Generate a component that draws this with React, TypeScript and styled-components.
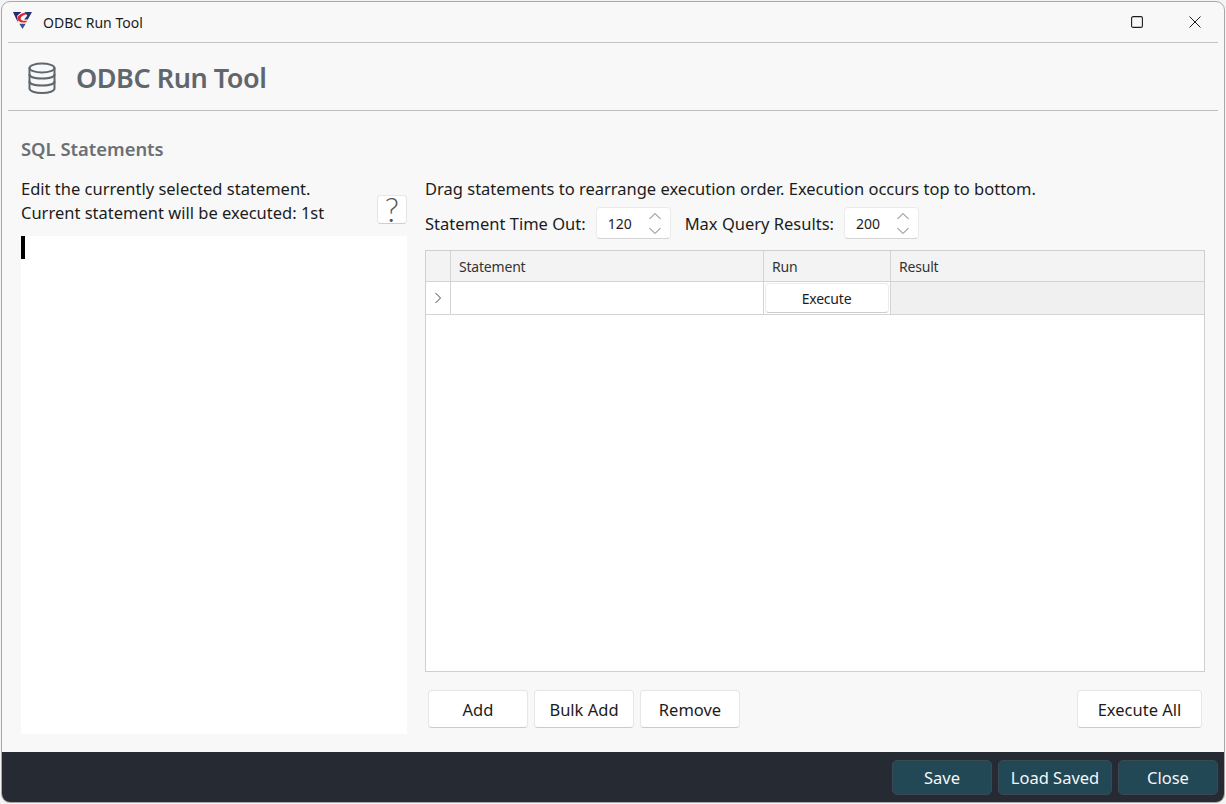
import React from "react";
import styled, { createGlobalStyle } from "styled-components";

const Global = createGlobalStyle`
  html, body { margin: 0; padding: 0; width: 1226px; height: 804px; overflow: hidden; background: #f4f4f4; }
  * { box-sizing: border-box; }
  body { font-family: "Noto Sans", "Open Sans", sans-serif; color: #1c1c1c; }
`;

const Window = styled.div`
  margin: 1px;
  width: 1224px;
  height: 802px;
  border: 1px solid #a9a9a9;
  border-radius: 9px;
  overflow: hidden;
  background: #f8f8f8;
  display: flex;
  flex-direction: column;
`;
const TitleBar = styled.div`
  height: 41px;
  margin: 0 6px;
  flex: none;
  border-bottom: 1px solid #c4c4c4;
  display: flex;
  align-items: center;
  padding-left: 5px;
`;
const LogoMark = styled.svg`
  margin-top: -3px;
`;
const TitleText = styled.span`
  font-size: 14px;
  margin-left: 11px;
`;
const WinButtons = styled.div`
  margin-left: auto;
  display: flex;
  align-items: center;
  gap: 46px;
  padding-right: 17px;
`;
const Header = styled.div`
  height: 68px;
  margin: 0 6px;
  padding: 3px 0 0 20px;
  flex: none;
  border-bottom: 1px solid #bdbdbd;
  display: flex;
  align-items: center;
  gap: 20px;
`;
const HeaderTitle = styled.h1`
  margin: -2px 0 0;
  font-size: 27px;
  font-weight: 600;
  color: #5f666d;
  letter-spacing: -0.45px;
`;
const Body = styled.div`
  flex: 1;
  min-height: 0;
  display: flex;
  flex-direction: column;
  padding: 25px 20px 18px 19px;
`;
const SectionTitle = styled.h2`
  margin: 0;
  height: 26px;
  line-height: 26px;
  font-size: 18.4px;
  font-weight: 600;
  color: #6b7075;
`;
const Columns = styled.div`
  flex: 1;
  min-height: 0;
  display: grid;
  grid-template-columns: 386px 780px;
  column-gap: 18px;
  padding-top: 15px;
`;
const Left = styled.div`
  display: flex;
  flex-direction: column;
  min-height: 0;
`;
const LeftHead = styled.div`
  display: flex;
  justify-content: space-between;
  height: 48px;
`;
const Copy = styled.div`
  font-size: 16.5px;
  line-height: 24px;
  white-space: nowrap;
`;
const HelpButton = styled.button`
  align-self: flex-end;
  width: 30px;
  height: 29px;
  margin-bottom: 1px;
  padding: 0;
  background: #fff;
  border: 1px solid #e5e5e5;
  border-bottom-color: #cfcfcf;
  border-radius: 4px;
  font: 300 33px/27px "Lato", sans-serif;
  color: #555;
`;
const Editor = styled.div`
  flex: 1;
  margin-top: 11px;
  background: #fff;
`;
const Caret = styled.div`
  width: 4px;
  height: 23px;
  background: #000;
`;
const Right = styled.div`
  display: flex;
  flex-direction: column;
  min-height: 0;
`;
const SpinRow = styled.div`
  display: flex;
  align-items: center;
  height: 32px;
  margin-top: 6px;
  font-size: 16.5px;
`;
const SpinLabel = styled.span`
  margin-right: 10px;
  white-space: nowrap;
`;
const Spinner = styled.div`
  width: 75px;
  height: 32px;
  margin-right: 14px;
  background: #fff;
  border: 1px solid #ebebeb;
  border-bottom-color: #d4d4d4;
  border-radius: 4px;
  display: flex;
  align-items: center;
  justify-content: space-between;
  padding: 0 8px 0 11px;
  font-size: 14px;
`;
const Arrows = styled.div`
  display: flex;
  flex-direction: column;
  gap: 7px;
`;
const Table = styled.div`
  flex: 1;
  min-height: 0;
  margin-top: 11px;
  background: #fff;
  border: 1px solid #cfcfcf;
`;
const Row = styled.div<{ $h: number }>`
  height: ${(p) => p.$h}px;
  display: grid;
  grid-template-columns: 25px 313px 127px 1fr;
  border-bottom: 1px solid #d4d4d4;
  font-size: 14px;
  letter-spacing: -0.2px;
`;
const HeadCell = styled.div`
  background: #f3f3f3;
  border-right: 1px solid #d4d4d4;
  padding: 1px 0 0 8px;
  display: flex;
  align-items: center;
  color: #333;
  &:last-child { border-right: 0; }
`;
const Cell = styled.div<{ $shade?: boolean }>`
  background: ${(p) => (p.$shade ? "#f0f0f0" : "#fff")};
  border-right: 1px solid #d4d4d4;
  display: flex;
  align-items: center;
  justify-content: center;
  &:last-child { border-right: 0; }
`;
const ExecButton = styled.button`
  width: 124px;
  height: 30px;
  margin-right: 1px;
  background: #fff;
  border: 1px solid #ececec;
  border-bottom-color: #cccccc;
  border-radius: 4px;
  font: 400 14px "Noto Sans", sans-serif;
  letter-spacing: -0.2px;
  color: #1c1c1c;
  padding: 0;
`;
const Actions = styled.div`
  display: flex;
  gap: 6px;
  padding: 18px 3px 6px 3px;
  height: 62px;
  flex: none;
`;
const Button = styled.button<{ $w: number; $push?: boolean }>`
  width: ${(p) => p.$w}px;
  height: 38px;
  margin-left: ${(p) => (p.$push ? "auto" : "0")};
  background: #fff;
  border: 1px solid #e6e6e6;
  border-bottom-color: #cbcbcb;
  border-radius: 4px;
  font: 400 16.5px "Noto Sans", sans-serif;
  color: #1c1c1c;
  padding: 0;
`;
const Footer = styled.div`
  height: 50px;
  flex: none;
  background: #262a33;
  display: flex;
  justify-content: flex-end;
  gap: 6px;
  padding: 8px 6px 0 0;
`;
const FootButton = styled.button<{ $w: number }>`
  width: ${(p) => p.$w}px;
  height: 35px;
  background: #224855;
  border: 1px solid #3a4a52;
  border-radius: 5px;
  color: #f4f6f7;
  font: 400 16.5px "Noto Sans", sans-serif;
  padding: 0;
`;

const Logo = () => (
  <LogoMark width="19" height="17" viewBox="0 0 18 16">
    <path d="M0 0h8L4 3.6 4.6 10z" fill="#1f2d6b" />
    <path d="M11 0h7l-4 7H10.5l3-3.5z" fill="#26346f" />
    <path d="M6 11h6L9 16z" fill="#39508f" />
    <path d="M12.5 0.5C8 1 4.6 3 4.4 5.8 4.2 8.6 7.5 10.5 12.4 9.6L13.6 8C10.2 8.6 7 8 7.2 6 7.4 4.2 10 3 12.2 2.4z" fill="#e1212e" />
  </LogoMark>
);

const DbIcon = () => (
  <svg width="28" height="32" viewBox="0 0 28 32" fill="none" stroke="#5f666d" strokeWidth="2" strokeLinecap="round">
    <ellipse cx="14" cy="6" rx="12.5" ry="4.5" />
    <path d="M1.5 6v20.5c0 2.5 5.5 4.5 12.5 4.5s12.5-2 12.5-4.5V6" />
    <path d="M1.5 12.5c0 2.5 5.5 4 12.5 4s12.5-1.5 12.5-4" />
    <path d="M1.5 19.5c0 2.5 5.5 4 12.5 4s12.5-1.5 12.5-4" />
  </svg>
);

const Chevron = ({ up }: { up?: boolean }) => (
  <svg width="14" height="8" viewBox="0 0 14 8" fill="none" stroke="#707070" strokeWidth="1">
    <path d={up ? "M1.5 7 7 1.5 12.5 7" : "M1.5 1 7 6.5 12.5 1"} />
  </svg>
);

const Spin = ({ value }: { value: number }) => (
  <Spinner>
    <span>{value}</span>
    <Arrows>
      <Chevron up />
      <Chevron />
    </Arrows>
  </Spinner>
);

export default function App() {
  return (
    <>
      <Global />
      <Window>
        <TitleBar>
          <Logo />
          <TitleText>ODBC Run Tool</TitleText>
          <WinButtons>
            <svg width="12" height="12" viewBox="0 0 12 12" fill="none" stroke="#1c1c1c" strokeWidth="1.1">
              <rect x="0.6" y="0.6" width="10.8" height="10.8" rx="1.5" />
            </svg>
            <svg width="12" height="12" viewBox="0 0 12 12" fill="none" stroke="#1c1c1c" strokeWidth="1">
              <path d="M0.5 0.5 11.5 11.5M11.5 0.5 0.5 11.5" />
            </svg>
          </WinButtons>
        </TitleBar>
        <Header>
          <DbIcon />
          <HeaderTitle>ODBC Run Tool</HeaderTitle>
        </Header>
        <Body>
          <SectionTitle>SQL Statements</SectionTitle>
          <Columns>
            <Left>
              <LeftHead>
                <Copy>
                  Edit the currently selected statement.
                  <br />
                  Current statement will be executed: 1st
                </Copy>
                <HelpButton>?</HelpButton>
              </LeftHead>
              <Editor>
                <Caret />
              </Editor>
            </Left>
            <Right>
              <Copy>Drag statements to rearrange execution order. Execution occurs top to bottom.</Copy>
              <SpinRow>
                <SpinLabel>Statement Time Out:</SpinLabel>
                <Spin value={120} />
                <SpinLabel>Max Query Results:</SpinLabel>
                <Spin value={200} />
              </SpinRow>
              <Table>
                <Row $h={31}>
                  <HeadCell />
                  <HeadCell>Statement</HeadCell>
                  <HeadCell>Run</HeadCell>
                  <HeadCell>Result</HeadCell>
                </Row>
                <Row $h={33}>
                  <Cell>
                    <svg width="8" height="12" viewBox="0 0 8 12" fill="none" stroke="#444" strokeWidth="1">
                      <path d="M1.5 1 6.5 6 1.5 11" />
                    </svg>
                  </Cell>
                  <Cell />
                  <Cell>
                    <ExecButton>Execute</ExecButton>
                  </Cell>
                  <Cell $shade />
                </Row>
              </Table>
              <Actions>
                <Button $w={100}>Add</Button>
                <Button $w={100}>Bulk Add</Button>
                <Button $w={100}>Remove</Button>
                <Button $w={125} $push>
                  Execute All
                </Button>
              </Actions>
            </Right>
          </Columns>
        </Body>
        <Footer>
          <FootButton $w={100}>Save</FootButton>
          <FootButton $w={114}>Load Saved</FootButton>
          <FootButton $w={100}>Close</FootButton>
        </Footer>
      </Window>
    </>
  );
}
